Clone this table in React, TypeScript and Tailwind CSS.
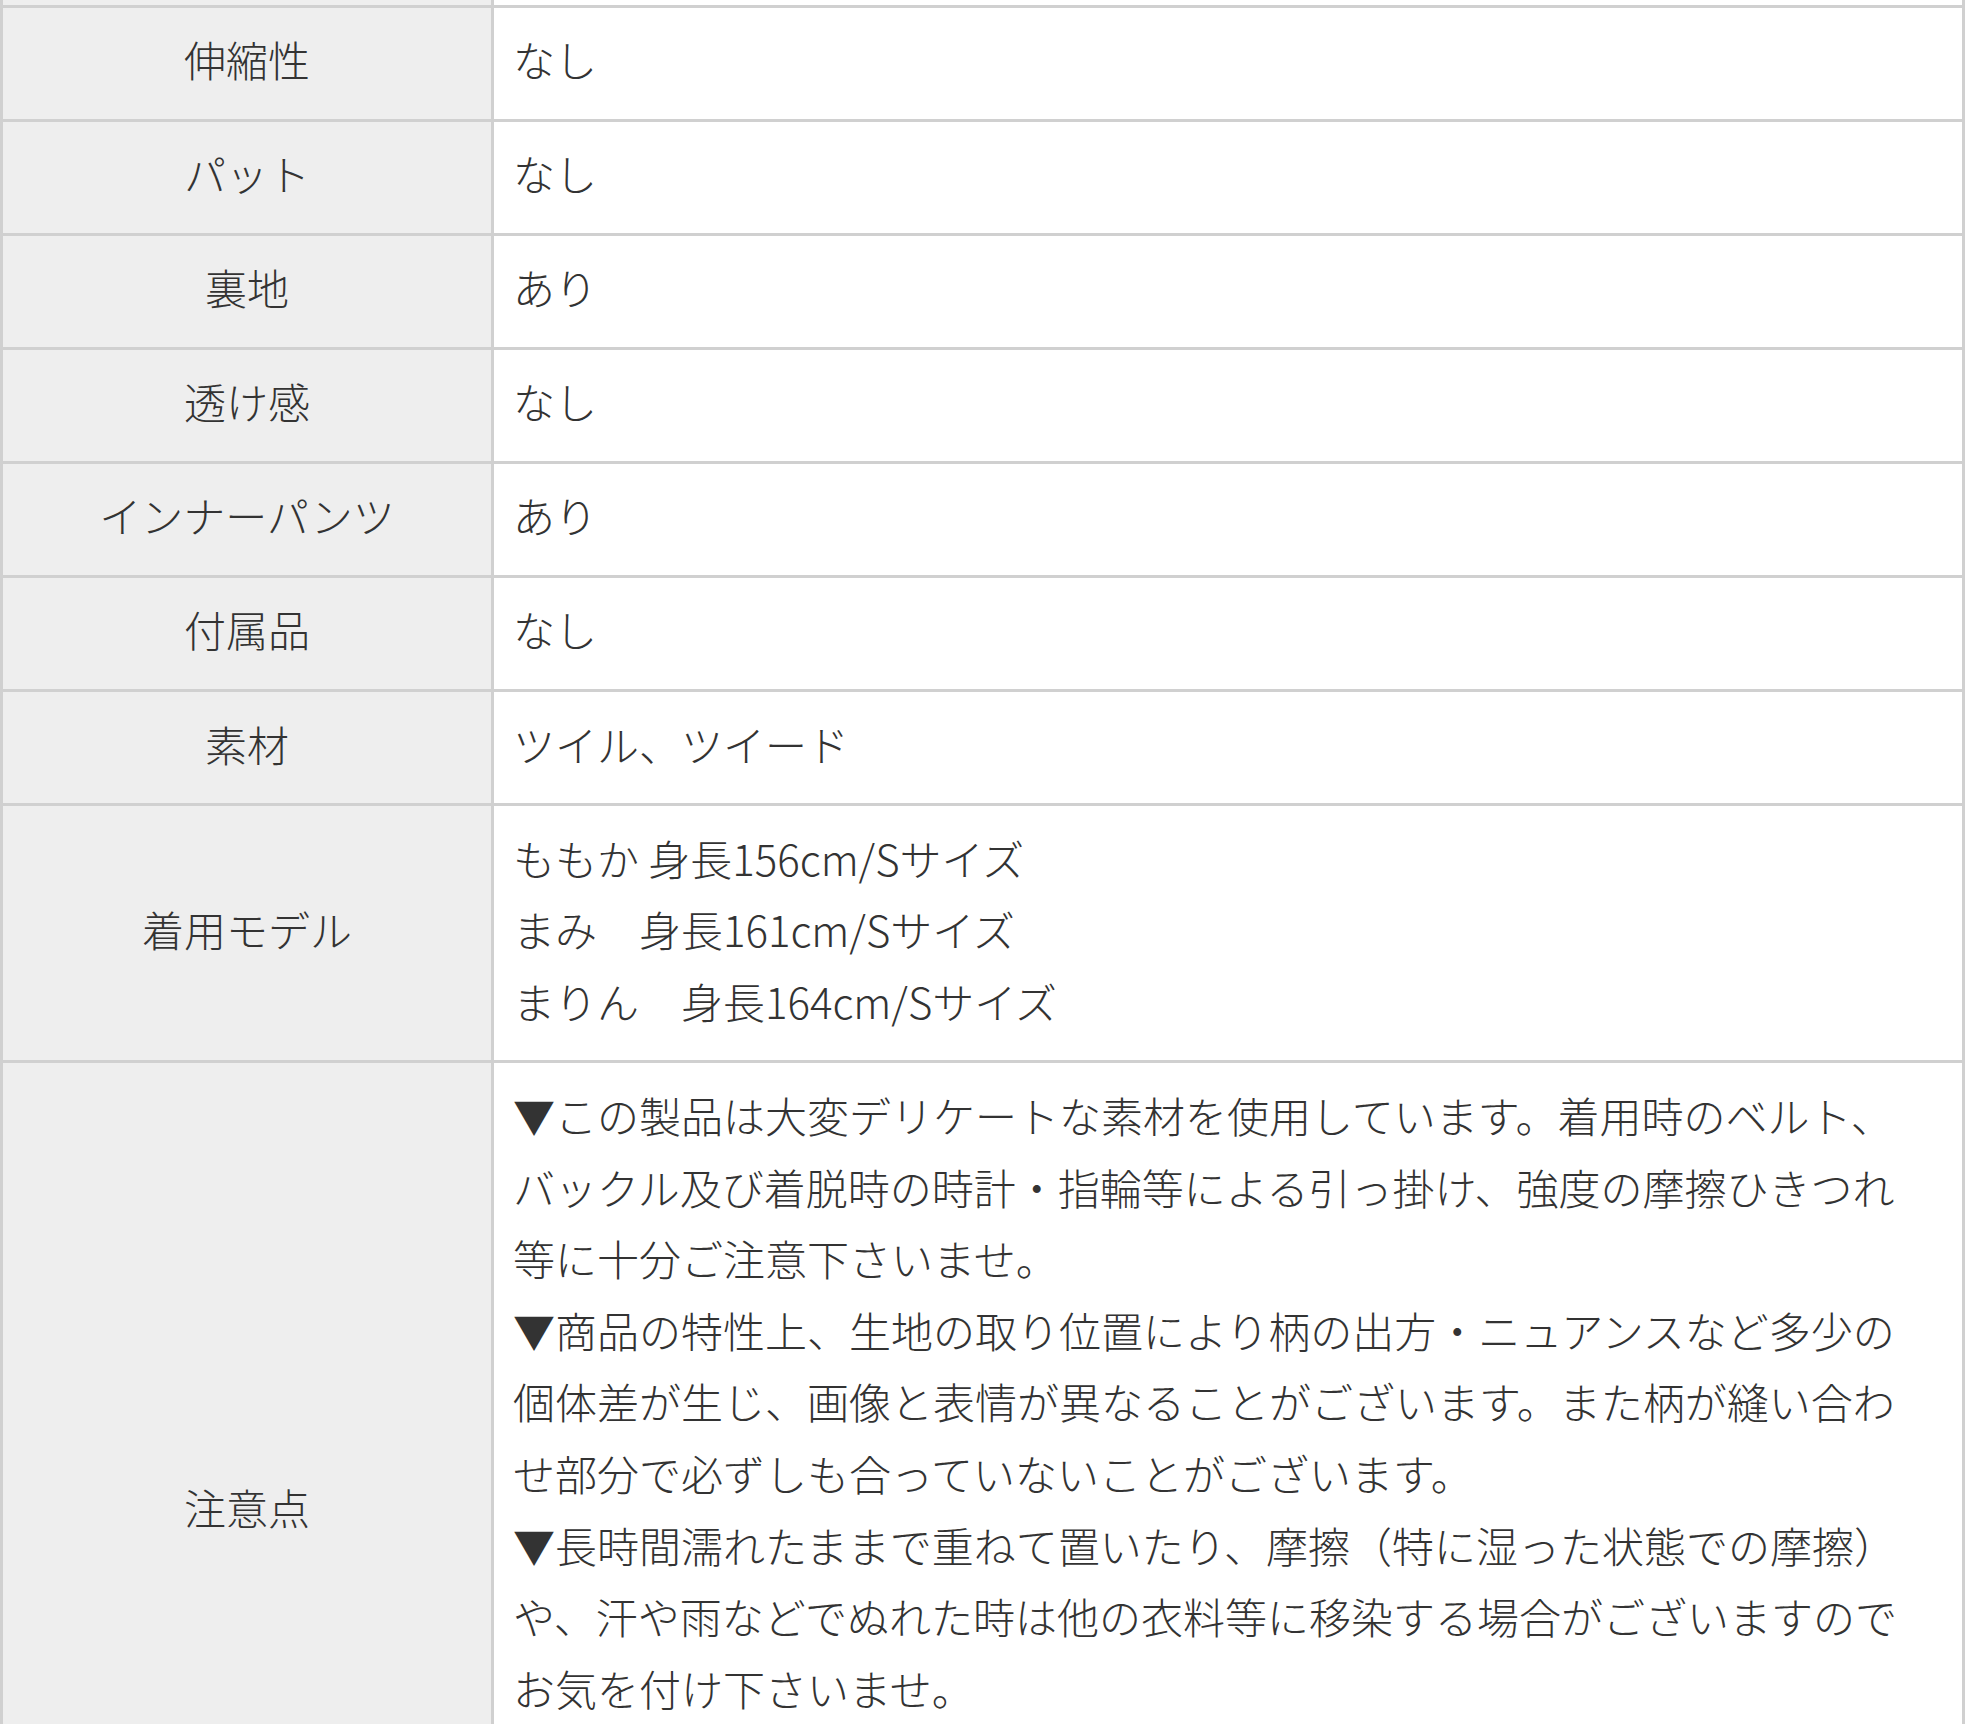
import React from 'react';

interface SpecRow {
  label: string;
  lines: string[];
  minHeight?: string;
}

const rows: SpecRow[] = [
  { label: '伸縮性', lines: ['なし'] },
  { label: 'パット', lines: ['なし'] },
  { label: '裏地', lines: ['あり'] },
  { label: '透け感', lines: ['なし'] },
  { label: 'インナーパンツ', lines: ['あり'] },
  { label: '付属品', lines: ['なし'] },
  { label: '素材', lines: ['ツイル、ツイード'] },
  {
    label: '着用モデル',
    lines: ['ももか 身長156cm/Sサイズ', 'まみ　身長161cm/Sサイズ', 'まりん　身長164cm/Sサイズ'],
  },
  {
    label: '注意点',
    minHeight: 'min-h-[856px]',
    lines: [
      '▼この製品は大変デリケートな素材を使用しています。着用時のベルト、',
      'バックル及び着脱時の時計・指輪等による引っ掛け、強度の摩擦ひきつれ',
      '等に十分ご注意下さいませ。',
      '▼商品の特性上、生地の取り位置により柄の出方・ニュアンスなど多少の',
      '個体差が生じ、画像と表情が異なることがございます。また柄が縫い合わ',
      'せ部分で必ずしも合っていないことがございます。',
      '▼長時間濡れたままで重ねて置いたり、摩擦（特に湿った状態での摩擦）',
      'や、汗や雨などでぬれた時は他の衣料等に移染する場合がございますので',
      'お気を付け下さいませ。',
    ],
  },
];

export default function App() {
  return (
    <div
      className="w-[1967px] h-[1724px] overflow-hidden bg-white text-[#333] text-[42px] leading-[71.6px] font-light"
      style={{ fontFamily: '"Noto Sans CJK JP", "Noto Sans", sans-serif' }}
    >
      <table className="w-[1965px] table-fixed border-collapse">
        <colgroup>
          <col className="w-[491px]" />
          <col />
        </colgroup>
        <tbody>
          {/* tail of the row above, cut off by the screen */}
          <tr className="h-[6px]">
            <td className="p-0 bg-[#eeeeee] border-x-[3px] border-b-[3px] border-[#d0d0d0]" />
            <td className="p-0 bg-white border-x-[3px] border-b-[3px] border-[#d0d0d0]" />
          </tr>
          {rows.map((row) => (
            <tr key={row.label}>
              <td className="bg-[#eeeeee] border-[3px] border-[#d0d0d0] pt-[15.5px] pb-[24px] px-4 text-center align-middle">
                {row.label}
              </td>
              <td className="bg-white border-[3px] border-[#d0d0d0] pt-[15.5px] pb-[24px] pl-[19px] pr-4 align-top whitespace-nowrap">
                <div className={row.minHeight}>
                  {row.lines.map((line, i) => (
                    <div key={i}>{line}</div>
                  ))}
                </div>
              </td>
            </tr>
          ))}
        </tbody>
      </table>
    </div>
  );
}
